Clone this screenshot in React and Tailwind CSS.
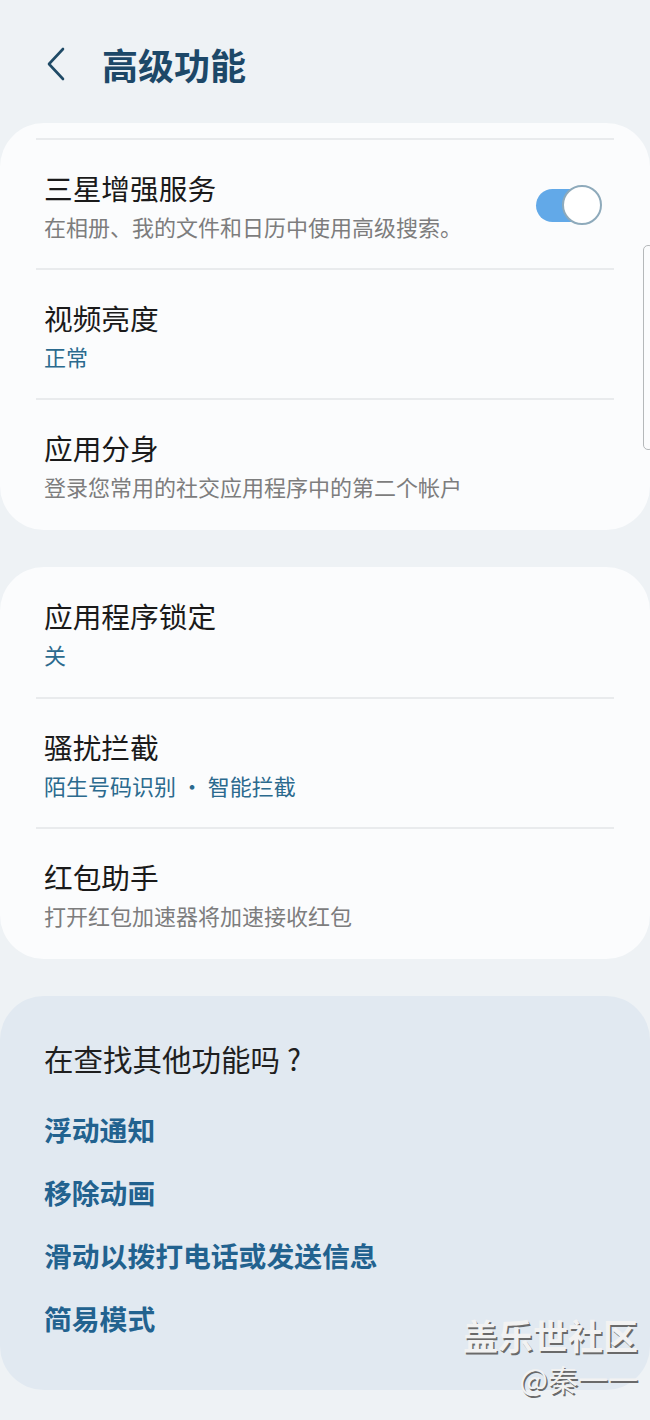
const font = { fontFamily: '"Noto Sans CJK SC", "Noto Sans", sans-serif' };

const topGroup = [
	{ title: "三星增强服务", sub: "在相册、我的文件和日历中使用高级搜索。", toggle: true },
	{ title: "视频亮度", sub: "正常", accent: true },
	{ title: "应用分身", sub: "登录您常用的社交应用程序中的第二个帐户" },
];

const secondGroup = [
	{ title: "应用程序锁定", sub: "关", accent: true },
	{ title: "骚扰拦截", sub: "陌生号码识别 • 智能拦截", accent: true },
	{ title: "红包助手", sub: "打开红包加速器将加速接收红包" },
];

const links = ["浮动通知", "移除动画", "滑动以拨打电话或发送信息", "简易模式"];

function Toggle() {
	return (
		<div className="relative w-[66px] h-[40px] shrink-0">
			<div className="absolute left-0 top-[4px] w-[56px] h-[33px] rounded-full bg-[#62a9e8]" />
			<div className="absolute right-0 top-0 w-[40px] h-[40px] rounded-full bg-white border-2 border-[#8eaabb]" />
		</div>
	);
}

// pad is the row's vertical padding, top rows of a card sit a bit lower
function SettingRow({ item, pad }) {
	return (
		<div className={`flex items-center pl-[44px] pr-[48px] ${pad}`}>
			<div className="flex-1 min-w-0">
				<p className="text-[28.7px] leading-[36px] text-[#1a1a1a]">{item.title}</p>
				<p
					className={`mt-[6px] text-[22px] leading-[28px] ${
						item.accent ? "text-[#2b6a8e]" : "text-[#7d7d7d]"
					}`}
				>
					{item.sub}
				</p>
			</div>
			{item.toggle && <Toggle />}
		</div>
	);
}

function Divider() {
	return <div className="mx-[36px] h-[2px] bg-[#e9ebed]" />;
}

function Card({ items, topDivider }) {
	return (
		<section className="rounded-[44px] bg-[#fbfcfd]">
			{topDivider && (
				<div className="pt-[15px]">
					<Divider />
				</div>
			)}
			{items.map((item, i) => {
				let pad = "pt-[30px] pb-[28px]";
				if (i === 0 && !topDivider) pad = "pt-[31px] pb-[29px]";
				if (i === items.length - 1) pad = "pt-[30px] pb-[30px]";
				return (
					<div key={item.title}>
						{i > 0 && <Divider />}
						<SettingRow item={item} pad={pad} />
					</div>
				);
			})}
		</section>
	);
}

export default function App() {
	return (
		<div className="relative min-h-[1420px] bg-[#eef2f5] overflow-hidden" style={font}>
			<header className="h-[123px] flex items-center pt-[5px] pl-[46px] gap-[36px]">
				<svg width="20" height="34" viewBox="0 0 20 34" fill="none" className="shrink-0">
					<polyline
						points="17,2 3,17 17,32"
						stroke="#1f4a66"
						strokeWidth="2.6"
						strokeLinecap="round"
						strokeLinejoin="round"
					/>
				</svg>
				<h1 className="text-[36px] leading-none font-bold text-[#1d4868]">高级功能</h1>
			</header>

			<div className="flex flex-col gap-[37px]">
				<Card items={topGroup} topDivider />
				<Card items={secondGroup} />

				<section className="rounded-[44px] bg-[#e1e9f1] pl-[44px] pt-[44px] pb-[54px]">
					<p className="text-[29.5px] leading-[36px] text-[#1f1f1f]">
						在查找其他功能吗<span className="ml-[7px]">?</span>
					</p>
					<div className="mt-[35px] flex flex-col gap-[27px]">
						{links.map((l) => (
							<a key={l} className="text-[27.8px] leading-[36px] font-bold text-[#22628f]">
								{l}
							</a>
						))}
					</div>
				</section>
			</div>

			{/* scroll indicator */}
			<div className="absolute right-[-4px] top-[245px] w-[11px] h-[205px] rounded-[5px] border-[1.5px] border-[#b5b8ba]" />

			{/* watermark */}
			<div className="absolute right-[12px] top-[1311px] flex flex-col items-end pointer-events-none">
				<span className="text-[35px] leading-[48px] font-bold text-[#f2f2f2] [text-shadow:1.5px_1.5px_0_#6a6a6a]">
					盖乐世社区
				</span>
				<span className="text-[30px] leading-[38px] text-[#f2f2f2] [text-shadow:1.5px_1.5px_0_#6a6a6a]">
					@秦一一
				</span>
			</div>
		</div>
	);
}
